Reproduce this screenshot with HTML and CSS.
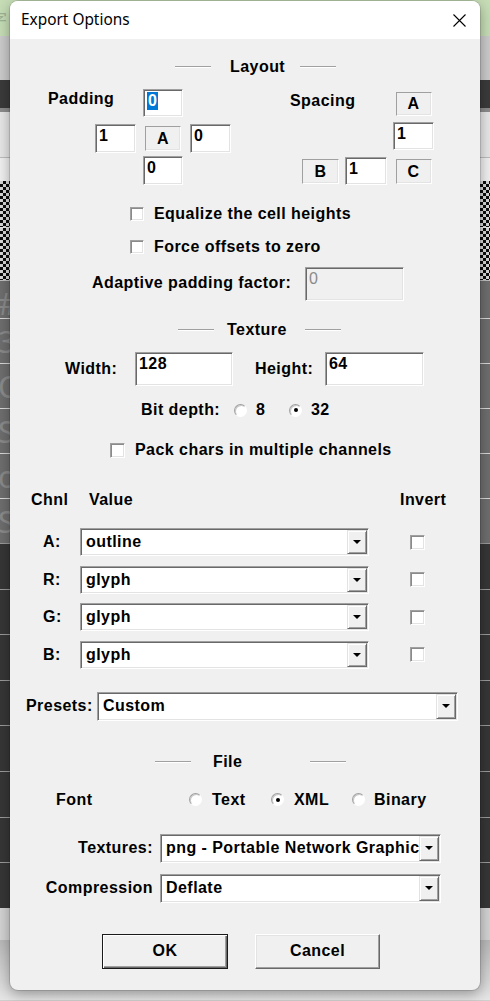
FILE: index.html
```html
<!DOCTYPE html>
<html>
<head>
<meta charset="utf-8">
<title>Export Options</title>
<link rel="stylesheet" href="styles.css">
</head>
<body>
<div class="backdrop">
  <div class="band band-green"><span class="bg-glyph bg-glyph-cjk">字</span></div>
  <div class="band band-toolbar"></div>
  <div class="band band-menu"></div>
  <div class="band band-menu-edge"></div>
  <div class="band band-pane"></div>
  <div class="band band-pane2"></div>
  <div class="band band-checker"></div>
  <div class="band band-checker band-checker2"></div>
  <div class="band band-grey band-grey-first"><span class="bg-glyph">#</span></div>
  <div class="band band-grey"><span class="bg-glyph">3</span></div>
  <div class="band band-grey"><span class="bg-glyph">C</span></div>
  <div class="band band-grey"><span class="bg-glyph">S</span></div>
  <div class="band band-grey"><span class="bg-glyph">c</span></div>
  <div class="band band-grey"><span class="bg-glyph">S</span></div>
  <div class="band band-dark"></div>
  <div class="band band-dark"></div>
  <div class="band band-dark"></div>
  <div class="band band-dark"></div>
  <div class="band band-dark"></div>
  <div class="band band-dark"></div>
  <div class="band band-dark"></div>
  <div class="band band-dark"></div>
  <div class="band band-light"></div>
  <div class="band band-bottom"></div>
</div>

<div class="dialog">
  <div class="titlebar">
    <span class="title">Export Options</span>
    <svg class="close" width="13" height="13" viewBox="0 0 13 13"><path d="M0.5 0.5 L12.5 12.5 M12.5 0.5 L0.5 12.5" stroke="#000" stroke-width="1.1" fill="none"/></svg>
  </div>

  <div class="body">
    <div class="row sep r-layout-sep">
      <span class="rule"></span><span class="sep-text sep-text-layout">Layout</span><span class="rule"></span>
    </div>

    <div class="row r-layout">
      <div class="pad-grid">
        <span class="lbl pad-lbl">Padding</span>
        <span class="field pad-top"><span class="sel">0</span></span>
        <span class="field pad-left">1</span>
        <span class="static pad-a">A</span>
        <span class="field pad-right">0</span>
        <span class="field pad-bottom">0</span>
      </div>
      <div class="spc-grid">
        <span class="lbl spc-lbl">Spacing</span>
        <span class="static spc-a">A</span>
        <span class="field spc-in">1</span>
        <span class="static spc-b">B</span>
        <span class="field spc-bin">1</span>
        <span class="static spc-c">C</span>
      </div>
    </div>

    <div class="row r-eq"><span class="check"></span><span class="lbl check-lbl">Equalize the cell heights</span></div>
    <div class="row r-force"><span class="check"></span><span class="lbl check-lbl">Force offsets to zero</span></div>

    <div class="row r-adaptive">
      <span class="lbl adaptive-lbl">Adaptive padding factor:</span>
      <span class="field field-disabled adaptive-in">0</span>
    </div>

    <div class="row sep r-tex-sep">
      <span class="rule"></span><span class="sep-text sep-text-tex">Texture</span><span class="rule"></span>
    </div>

    <div class="row r-size">
      <span class="lbl size-lbl">Width:</span>
      <span class="field size-w">128</span>
      <span class="lbl size-lbl size-lbl2">Height:</span>
      <span class="field size-h">64</span>
    </div>

    <div class="row r-bits">
      <span class="lbl bits-lbl">Bit depth:</span>
      <span class="opt opt-8"><span class="radio"></span><span class="lbl">8</span></span>
      <span class="opt"><span class="radio radio-on"></span><span class="lbl">32</span></span>
    </div>

    <div class="row r-pack"><span class="check"></span><span class="lbl check-lbl">Pack chars in multiple channels</span></div>

    <div class="row r-chhead">
      <span class="lbl ch-col1">Chnl</span>
      <span class="lbl ch-col2">Value</span>
      <span class="lbl">Invert</span>
    </div>

    <div class="row r-ch r-ch-first">
      <span class="lbl ch-lbl">A:</span>
      <span class="combo ch-combo"><span class="combo-text">outline</span><span class="drop"><span class="tri"></span></span></span>
      <span class="check ch-check"></span>
    </div>
    <div class="row r-ch">
      <span class="lbl ch-lbl">R:</span>
      <span class="combo ch-combo"><span class="combo-text">glyph</span><span class="drop"><span class="tri"></span></span></span>
      <span class="check ch-check"></span>
    </div>
    <div class="row r-ch">
      <span class="lbl ch-lbl">G:</span>
      <span class="combo ch-combo"><span class="combo-text">glyph</span><span class="drop"><span class="tri"></span></span></span>
      <span class="check ch-check"></span>
    </div>
    <div class="row r-ch">
      <span class="lbl ch-lbl">B:</span>
      <span class="combo ch-combo"><span class="combo-text">glyph</span><span class="drop"><span class="tri"></span></span></span>
      <span class="check ch-check"></span>
    </div>

    <div class="row r-presets">
      <span class="lbl presets-lbl">Presets:</span>
      <span class="combo presets-combo"><span class="combo-text">Custom</span><span class="drop"><span class="tri"></span></span></span>
    </div>

    <div class="row sep r-file-sep">
      <span class="rule"></span><span class="sep-text sep-text-file">File</span><span class="rule"></span>
    </div>

    <div class="row r-font">
      <span class="lbl font-lbl">Font</span>
      <span class="opt font-opt1"><span class="radio"></span><span class="lbl">Text</span></span>
      <span class="opt font-opt2"><span class="radio radio-on"></span><span class="lbl">XML</span></span>
      <span class="opt"><span class="radio"></span><span class="lbl">Binary</span></span>
    </div>

    <div class="row r-textures">
      <span class="lbl file-lbl">Textures:</span>
      <span class="combo file-combo"><span class="combo-text">png - Portable Network Graphics</span><span class="drop"><span class="tri"></span></span></span>
    </div>
    <div class="row r-compress">
      <span class="lbl file-lbl">Compression</span>
      <span class="combo file-combo"><span class="combo-text">Deflate</span><span class="drop"><span class="tri"></span></span></span>
    </div>

    <div class="row r-buttons">
      <span class="btn btn-default">OK</span>
      <span class="btn btn-cancel">Cancel</span>
    </div>
  </div>
</div>
</body>
</html>
```

FILE: styles.css
```css
* { box-sizing: border-box; }
html, body { margin: 0; padding: 0; }
body {
  width: 490px;
  height: 1001px;
  overflow: hidden;
  position: relative;
  background: #d0d0d0;
  font-family: "Liberation Sans", Arial, sans-serif;
}

/* ---------- backdrop (application behind the dialog) ---------- */
.backdrop { display: flex; flex-direction: column; height: 1001px; }
.band { flex: none; overflow: hidden; position: relative; }
.band-green { height: 36px; background: #c6ddb6; }
.band-toolbar { height: 44px; background: #cbcbcb; }
.band-menu { height: 28px; background: #3b3b3b; }
.band-menu-edge { height: 4px; background: #8c8c8c; }
.band-pane { height: 46px; background: #e7e7e7; border-bottom: 1px solid #bdbdbd; }
.band-pane2 { height: 23px; background: #f0f0f0; }
.band-checker {
  height: 47px;
  border-bottom: 1px solid #e8e8e8;
  background: repeating-conic-gradient(#0c0c0c 0% 25%, #d8d8d8 0% 50%) 0 0 / 6px 6px;
}
.band-checker2 { height: 53px; border-bottom-color: #c0c0c0; }
.band-grey { height: 45px; background: #6e6e6e; border-top: 1px solid #d8d8d8; }
.band-grey-first { height: 37px; border-top: none; }
.band-dark { height: 45.6px; background: #363636; border-top: 1px solid #9a9a9a; }
.band-light { height: 32px; background: #d3d3d3; }
.band-bottom { height: 60px; background: linear-gradient(#b8b8b8, #e6e6e6); }
.bg-glyph {
  display: block;
  font-family: "Noto Sans", sans-serif;
  font-size: 30px;
  line-height: 45px;
  color: #8a8a8a;
  margin-left: -2px;
}
.bg-glyph-cjk {
  font-family: "Noto Sans CJK SC", sans-serif;
  font-size: 16px;
  line-height: 36px;
  color: #9fb394;
  margin-left: -9px;
}

/* ---------- dialog ---------- */
.dialog {
  position: absolute;
  left: 10px;
  top: 1px;
  width: 470px;
  height: 989px;
  background: #f0f0f0;
  border-radius: 8px;
  box-shadow: 0 0 0 1px rgba(0, 0, 0, 0.12), 0 4px 14px rgba(0, 0, 0, 0.35);
  overflow: hidden;
}
.titlebar {
  height: 38px;
  background: #ffffff;
  display: flex;
  align-items: center;
  padding-left: 11px;
  padding-right: 14px;
}
.title {
  flex: 1;
  font-family: "Noto Sans", sans-serif;
  font-size: 15.4px;
  color: #000;
  padding-bottom: 1px;
}
.close { display: block; }

.body {
  display: flex;
  flex-direction: column;
  font-weight: bold;
  font-size: 16px;
  letter-spacing: 0.45px;
  color: #000;
}
.row { display: flex; align-items: center; flex: none; }
.lbl { line-height: 18px; white-space: nowrap; }

/* separators */
.rule {
  width: 36px;
  height: 2px;
  border-top: 1px solid #a0a0a0;
  border-bottom: 1px solid #ffffff;
}
.sep-text { line-height: 18px; }
.sep-text-layout { margin-left: 19px; margin-right: 15px; }
.sep-text-tex { margin-left: 13px; margin-right: 18px; }
.sep-text-file { margin-left: 22px; width: 97px; }

/* fields */
.field {
  display: block;
  background: #ffffff;
  border: 1px solid;
  border-color: #a0a0a0 #ffffff #ffffff #a0a0a0;
  box-shadow: inset 1px 1px 0 #696969, inset -1px -1px 0 #e3e3e3;
  padding: 2px 0 0 3px;
  line-height: 18px;
  white-space: nowrap;
  overflow: hidden;
}
.field-disabled { background: #f0f0f0; color: #8a8a8a; font-weight: normal; }
.sel { background: #0078d7; color: #ffffff; display: inline-block; padding: 0 1px; }
.static {
  display: flex;
  align-items: center;
  justify-content: center;
  background: #f0f0f0;
  border: 1px solid;
  border-color: #a0a0a0 #ffffff #ffffff #a0a0a0;
  box-shadow: inset -1px -1px 0 #e3e3e3;
}

/* layout block */
.r-layout-sep { margin-top: 20px; height: 16px; padding-left: 165px; }
.r-layout { margin-top: 14px; height: 96px; align-items: flex-start; padding-left: 38px; }
.pad-grid {
  display: grid;
  grid-template-columns: 47px 41px 7px 40px 7px 41px;
  grid-template-rows: 35px 32px 29px;
}
.pad-lbl { grid-row: 1; grid-column: 1 / 3; margin-top: 1px; }
.pad-top { grid-row: 1; grid-column: 4; height: 28px; }
.pad-left { grid-row: 2; grid-column: 2; height: 29px; }
.pad-a { grid-row: 2; grid-column: 4; width: 36px; height: 25px; margin-top: 2px; justify-self: center; }
.pad-right { grid-row: 2; grid-column: 6; height: 29px; }
.pad-bottom { grid-row: 3; grid-column: 4; height: 29px; }

.spc-grid {
  margin-left: 59px;
  display: grid;
  grid-template-columns: 12px 37px 6px 42px 6px 41px;
  grid-template-rows: 31px 35px 30px;
}
.spc-lbl { grid-row: 1; grid-column: 1 / 5; margin-top: 3px; }
.spc-a { grid-row: 1; grid-column: 6; width: 36px; height: 24px; margin-top: 3px; justify-self: center; }
.spc-in { grid-row: 2; grid-column: 6; height: 28px; margin-top: 2px; }
.spc-b { grid-row: 3; grid-column: 2; height: 25px; margin-top: 4px; }
.spc-bin { grid-row: 3; grid-column: 4; height: 28px; margin-top: 2px; }
.spc-c { grid-row: 3; grid-column: 6; width: 36px; height: 25px; margin-top: 4px; justify-self: center; }

/* check boxes */
.check {
  display: block;
  width: 14px;
  height: 14px;
  background: #ffffff;
  border: 1px solid;
  border-color: #a0a0a0 #ffffff #ffffff #a0a0a0;
  box-shadow: inset 1px 1px 0 #8a8a8a, inset -1px -1px 0 #e3e3e3;
  flex: none;
}
.check-lbl { margin-left: 10px; }
.r-eq { margin-top: 19px; height: 20px; padding-left: 120px; }
.r-force { margin-top: 13px; height: 20px; padding-left: 120px; }

.r-adaptive { margin-top: 10px; height: 34px; padding-left: 82px; }
.adaptive-lbl { width: 213px; padding-bottom: 3px; }
.adaptive-in { width: 99px; height: 34px; }

.r-tex-sep { margin-top: 21px; height: 16px; padding-left: 168px; }

.r-size { margin-top: 14px; height: 34px; padding-left: 55px; }
.size-lbl { width: 70px; }
.size-lbl2 { margin-left: 22px; }
.size-w { width: 98px; height: 34px; }
.size-h { width: 99px; height: 34px; }

/* radios */
.opt { display: flex; align-items: center; gap: 9px; }
.radio {
  display: block;
  width: 13px;
  height: 13px;
  border-radius: 50%;
  background: #ffffff;
  border: 1px solid;
  border-color: #a0a0a0 #ffffff #ffffff #a0a0a0;
  box-shadow: inset 1px 1px 0 #c8c8c8;
  position: relative;
  flex: none;
}
.radio-on::after {
  content: "";
  position: absolute;
  left: 3.5px;
  top: 3.5px;
  width: 4px;
  height: 4px;
  border-radius: 50%;
  background: #000;
}
.r-bits { margin-top: 14px; height: 20px; padding-left: 131px; }
.bits-lbl { width: 93px; }
.opt-8 { width: 55px; }

.r-pack { margin-top: 20px; height: 20px; padding-left: 100px; }
.r-pack .check { width: 15px; height: 15px; }

/* channels */
.r-chhead { margin-top: 30px; height: 20px; padding-left: 21px; }
.ch-col1 { width: 58px; }
.ch-col2 { width: 311px; }
.r-ch { height: 28px; padding-left: 33px; margin-top: 9.67px; }
.r-ch-first { margin-top: 18px; }
.ch-lbl { width: 37px; }
.ch-combo { width: 289px; }
.ch-check { margin-left: 41px; width: 15px; height: 15px; }

/* combo boxes */
.combo {
  display: flex;
  height: 100%;
  background: #ffffff;
  border: 1px solid;
  border-color: #a0a0a0 #ffffff #ffffff #a0a0a0;
  box-shadow: inset 1px 1px 0 #696969, inset -1px -1px 0 #e3e3e3;
  padding: 1px;
}
.combo-text {
  flex: 1;
  min-width: 0;
  overflow: hidden;
  white-space: nowrap;
  padding-left: 4px;
  display: flex;
  align-items: center;
  line-height: 18px;
}
.drop {
  flex: none;
  width: 20px;
  display: flex;
  align-items: center;
  justify-content: center;
  background: #f0f0f0;
  border: 1px solid;
  border-color: #e3e3e3 #696969 #696969 #e3e3e3;
  box-shadow: inset 1px 1px 0 #ffffff, inset -1px -1px 0 #a0a0a0;
}
.tri {
  width: 0;
  height: 0;
  border-left: 4px solid transparent;
  border-right: 4px solid transparent;
  border-top: 4px solid #000;
}

.r-presets { margin-top: 23px; height: 29px; padding-left: 16px; }
.presets-lbl { width: 71px; }
.presets-combo { width: 361px; }

.r-file-sep { margin-top: 33px; height: 16px; padding-left: 145px; }

.r-font { margin-top: 20px; height: 20px; padding-left: 46px; }
.font-lbl { width: 133px; }
.opt.font-opt1, .opt.font-opt2 { gap: 10px; }
.font-opt1 { width: 82px; }
.font-opt2 { width: 81px; }

.r-textures { margin-top: 24px; height: 29px; }
.r-compress { margin-top: 11px; height: 29px; }
.file-lbl { width: 150px; text-align: right; padding-right: 7px; }
.file-combo { width: 281px; }

/* buttons */
.r-buttons { margin-top: 31px; height: 35px; padding-left: 92px; gap: 27px; }
.btn {
  display: flex;
  align-items: center;
  justify-content: center;
  height: 35px;
  background: #f0f0f0;
  border: 1px solid;
  border-color: #ffffff #696969 #696969 #ffffff;
  box-shadow: inset -1px -1px 0 #a0a0a0, inset 1px 1px 0 #e3e3e3;
}
.btn-default {
  width: 126px;
  border-color: #1a1a1a;
  box-shadow: inset 1px 1px 0 #ffffff, inset -1px -1px 0 #696969, inset -2px -2px 0 #a0a0a0;
}
.btn-cancel { width: 125px; }
```
